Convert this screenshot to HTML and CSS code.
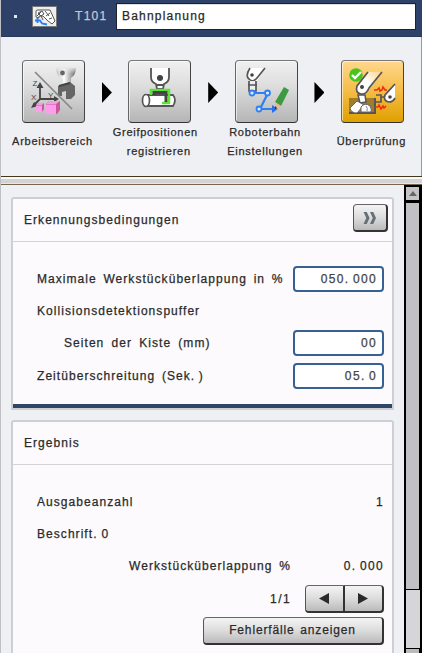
FILE: index.html
```html
<!DOCTYPE html>
<html lang="de">
<head>
<meta charset="utf-8">
<title>Bahnplanung</title>
<link rel="stylesheet" href="styles.css">
</head>
<body>
<div class="window">
  <header class="titlebar">
    <span class="dot"></span>
    <svg class="tool-icon" viewBox="0 0 25 21">
      <rect x=".5" y=".5" width="24" height="20" fill="#eee" stroke="#777"/>
      <path d="M4 11V5q0-1 2-1h12l5 11-3 3-4-3-5-5H7v2z" fill="#fff" stroke="#555"/>
      <path d="M6 7l4-2 2 3-3 2zM13 5l4 5M18 7l-4 3M5 10l4-4M17 13l3-1M9 10l2 4" fill="none" stroke="#555"/>
      <path d="M3 14.500h5l2 3 5 1M5.500 12v5" fill="none" stroke="#2b7df0" stroke-width="1.8"/>
    </svg>
    <span class="code">T101</span>
    <div class="name">Bahnplanung</div>
  </header>

  <nav class="steps">
    <div class="step">
      <div class="tile">
        <svg viewBox="0 0 60 60">
          <defs><linearGradient id="metal" x1="0" x2="1"><stop offset="0" stop-color="#bbb"/><stop offset=".4" stop-color="#fff"/><stop offset="1" stop-color="#666"/></linearGradient><linearGradient id="fade" x1="0" x2="0" y1="0" y2="1"><stop offset="0" stop-color="#e8e8e8"/><stop offset="1" stop-color="#e8e8e8" stop-opacity="0"/></linearGradient></defs>
          <path d="M33 7q0 9 7 11v4h8v-5q5-3 5-10z" fill="url(#metal)"/>
          <path d="M32 6h22v7H32z" fill="url(#fade)"/>
          <circle cx="39.500" cy="12" r="2.400" fill="#666"/>
          <path d="M35 25l12-4 5 4v9l-4 4h-5v-8l-4 1v4h-4z" fill="#666"/>
          <path d="M36 25l11-3" stroke="#444" stroke-width="2"/>
          <path d="M12 11l37 37" stroke="#888" stroke-width="1.7"/>
          <path d="M17 38V25M17 38h15M17 38l-6 6" fill="none" stroke="#444" stroke-width="1.8"/>
          <path d="M17 21l-3.500 6h7zM36 38l-5-3v6zM8 47l7-2-4-4z" fill="#444"/>
          <g class="axis"><text x="9.500" y="25">Z</text><text x="8" y="39">X</text><text x="25" y="37">Y</text></g>
          <path d="M13 44l3-2h5v6l-2 3h-6zM23 43l3-3h11v9l-3 4H23z" fill="#c9579c"/>
          <path d="M13 44.500h6V51h-6zM23 43.500h10V53H23z" fill="#ff9cec"/>
          <path d="M13 44l3-2h5l-2 2zM23 43l3-3h11l-4 3z" fill="#eea0d9"/>
        </svg>
      </div>
      <div class="caption">Arbeitsbereich</div>
    </div>
    <div class="next"></div>
    <div class="step">
      <div class="tile">
        <svg viewBox="0 0 60 60">
          <path d="M22 7v9q0 5 5 7l1 6h6l1-6q5-2 5-7V7" fill="#fff"/>
          <path d="M22 7v9q0 5 5 7l1 5h6l1-5q5-2 5-7V7M27 24h8" fill="none" stroke="#555" stroke-width="1.8"/>
          <circle cx="31" cy="17" r="3" fill="#444"/>
          <path d="M16 34h28q4 5 0 11H16z" fill="#fff" stroke="#555" stroke-width="1.8"/>
          <ellipse cx="17" cy="39.500" rx="3.500" ry="6" fill="#fff" stroke="#555" stroke-width="1.7"/>
          <path d="M22 34v-5h18v13h-7" fill="none" stroke="#5ee238" stroke-width="2.500"/>
          <path d="M25 34v-2.500h12V41" fill="none" stroke="#444" stroke-width="3"/>
        </svg>
      </div>
      <div class="caption"><span class="pull">Greifpositionen</span><span>registrieren</span></div>
    </div>
    <div class="next"></div>
    <div class="step">
      <div class="tile">
        <svg viewBox="0 0 60 60">
          <path d="M14 7q-4 7-1 10l3 3h5l8-13z" fill="#fff"/>
          <path d="M14 7q-5 8-1 11 4 4 8-1l8-10" fill="none" stroke="#555" stroke-width="1.7"/>
          <path d="M13 20v10h7V20M12 24h9" fill="#eee" stroke="#555" stroke-width="1.7"/>
          <circle cx="16" cy="14" r="1.800" fill="#444"/>
          <path d="M16 32h16l-8 16h14" fill="none" stroke="#2f80f2" stroke-width="2.200"/>
          <path d="M36 44l6 4-6 4z" fill="#2470ee"/>
          <g fill="#dfeaff" stroke="#2f80f2" stroke-width="1.800"><circle cx="16" cy="32" r="2.500"/><circle cx="31.500" cy="32" r="2.500"/><circle cx="23" cy="48" r="2.500"/></g>
          <path d="M48 26l5 3-8 16-6-4z" fill="#3d9b3f"/>
          <path d="M39 41l6 4-6 4z" fill="#e9b98e"/><path d="M39 45l2 2-2 2z" fill="#333"/>
        </svg>
      </div>
      <div class="caption"><span>Roboterbahn</span><span>Einstellungen</span></div>
    </div>
    <div class="next"></div>
    <div class="step">
      <div class="tile active">
        <svg viewBox="0 0 60 60">
          <defs><linearGradient id="arm" x1="0" y1="1" x2="1" y2="0"><stop offset=".5" stop-color="#fff"/><stop offset="1" stop-color="#fff" stop-opacity=".1"/></linearGradient></defs>
          <path d="M7 37h26v15H7z" fill="#a07b2b"/>
          <path d="M7 52h26V37" fill="none" stroke="#555" stroke-width="2"/>
          <path d="M26 11L15 26q-2 6 4 8 4 1 8-6L41 11z" fill="url(#arm)"/>
          <path d="M26 11L15 25q-2 7 4 8 5 1 8-6L40 11" fill="none" stroke="#555" stroke-width="1.7"/>
          <circle cx="20" cy="26" r="2" fill="#444"/>
          <path d="M16 34h7l1 7-6 1z" fill="#fff" stroke="#555" stroke-width="1.500"/>
          <path d="M15 40l7 4-7 8q-6 0-7-5z" fill="#fff" stroke="#666" stroke-width="1"/>
          <path d="M19 51v-5q4-5 9-1 2 3 1 6z" fill="#fff" stroke="#666" stroke-width="1"/>
          <path d="M24 45q2 2 1 5" fill="none" stroke="#888"/>
          <path d="M53 23L43 35q-1 6 5 6 3 0 5-4z" fill="#fff"/>
          <path d="M53 23L43 34q-2 6 4 7 4 0 6-4M43 36h-4M34 34h5v7h-5" fill="none" stroke="#555" stroke-width="1.700"/>
          <circle cx="48" cy="36" r="1.800" fill="#444"/>
          <path d="M32 29h3l2-2 1 3 2-1 1-3 2 3h2M33 46h3l1-2 2 4 2-3 1 2 2-2" fill="none" stroke="#f32c0f" stroke-width="1.600"/>
          <circle cx="14" cy="14" r="6.800" fill="#48c51d"/><path d="M10 14l3 3 6-6" fill="none" stroke="#fff" stroke-width="2.400"/>
        </svg>
      </div>
      <div class="caption">Überprüfung</div>
    </div>
  </nav>

  <div class="splitter"></div>

  <main class="body">
    <div class="panels">
      <section class="panel conditions">
        <div class="panel-head"><h2>Erkennungsbedingungen</h2>
          <button class="btn more"><svg viewBox="0 0 14 13"><path d="M0 0h3.500l3 6.500-3 6.500H0l3-6.500zM7 0h3.500l3 6.500-3 6.500H7l3-6.500z" fill="#667079"/></svg></button>
        </div>
        <div class="rows">
          <div class="row"><span>Maximale Werkstücküberlappung in %</span><div class="field num">050. 000</div></div>
          <div class="row"><span>Kollisionsdetektionspuffer</span></div>
          <div class="row indent"><span class="wider">Seiten der Kiste (mm)</span><div class="field num">00</div></div>
          <div class="row"><span>Zeitüberschreitung (Sek.<span class="narrow"> </span>)</span><div class="field num">05. 0</div></div>
        </div>
      </section>
      <section class="panel result">
        <div class="panel-head"><h2>Ergebnis</h2></div>
        <div class="rows">
          <div class="row"><span>Ausgabeanzahl</span><span class="num">1</span></div>
          <div class="row"><span class="tight">Beschrift. 0</span></div>
          <div class="row overlap"><span>Werkstücküberlappung %</span><span class="num">0. 000</span></div>
          <div class="row end"><span class="page">1/1</span>
            <div class="pager"><button class="btn"><svg viewBox="0 0 10 11"><path d="M10 0v11L0 5.500z"/></svg></button><button class="btn"><svg viewBox="0 0 10 11"><path d="M0 0v11l10-5.500z"/></svg></button></div>
          </div>
          <div class="row end"><button class="btn wide">Fehlerfälle anzeigen</button></div>
        </div>
      </section>
    </div>
    <div class="scrollbar">
      <div class="up"><svg viewBox="0 0 8 5"><path d="M4 0l4 5H0z" fill="#666"/></svg></div>
      <div class="thumb"></div>
      <div class="track"></div>
      <div class="down"></div>
    </div>
  </main>
</div>
</body>
</html>
```
FILE: styles.css
```css
* { box-sizing: border-box; }

body {
  margin: 0;
  font: 12px/16px "Liberation Sans", Arial, sans-serif;
  letter-spacing: 1.05px;
  word-spacing: 2.3px;
  color: #2a2a2a;
  -webkit-text-stroke: .25px currentColor;
}

.window {
  width: 422px;
  height: 653px;
  display: flex;
  flex-direction: column;
  overflow: hidden;
  background: #eff0f3;
  border-left: 1px solid #bfc0c4;
}

svg { display: block; }

.titlebar {
  flex: none;
  height: 37px;
  display: flex;
  align-items: flex-start;
  background: #2e4168;
  padding: 3px 6px 0 12px;
  margin-left: -1px;
  border-bottom: 1px solid #27385c;
}
.dot { width: 3px; height: 3px; margin: 12px 17px 0 2px; background: #e4e7ef; }
.tool-icon { width: 25px; height: 21px; margin: 3px 18px 0 -2px; }
.code { width: 41px; margin-top: 5px; color: #c3c9d6; letter-spacing: 1.3px; }
.name {
  flex: 1;
  height: 27px;
  padding: 4px 5px;
  background: #fff;
  border: 1px solid #1c222e;
  box-shadow: inset 0 1px #ddd;
  letter-spacing: 1.2px;
}

.steps {
  flex: none;
  height: 139px;
  display: flex;
  padding: 23px 0 0 21px;
  font-size: 11px;
  letter-spacing: .75px;
  border-right: 1px solid #9a9a9e;
}
.step { width: 63px; display: flex; flex-direction: column; align-items: center; }
.tile {
  width: 63px;
  height: 63px;
  flex: none;
  border: 1.5px solid #555;
  border-color: #777 #444 #333 #666;
  border-radius: 4px;
  background: linear-gradient(#f0f0f0, #dedede 40%, #b5b5b5);
  box-shadow: inset 1px 1px #fff9;
}
.tile.active { background: linear-gradient(#ffd78e, #f5bc45 50%, #e0a000); }
.tile svg { width: 60px; height: 60px; }
.axis { font-size: 8px; letter-spacing: 0; fill: #444; }
.next {
  width: 10px;
  height: 21px;
  margin: 22px 16.4px 0 16.9px;
  background: #000;
  clip-path: polygon(0 0, 100% 50%, 0 100%);
}
.caption {
  height: 37px;
  line-height: 18.7px;
  white-space: nowrap;
  display: flex;
  flex-direction: column;
  justify-content: center;
  align-items: center;
  margin-right: 2px;
}
.pull { margin-right: 7px; }

.splitter {
  flex: none;
  height: 9px;
  background: linear-gradient(#43381f 0 1px, #faf8f2 1px 3px, #d2d3d5 3px 7px, #f0e6d6 7px 8px, #79664c 8px 9px);
}

.body { flex: 1; min-height: 0; display: flex; }
.panels {
  flex: 1;
  display: flex;
  flex-direction: column;
  gap: 10px;
  padding: 12px 10px 0;
}
.panel {
  flex: none;
  background: #fcfafc;
  border: 2px solid #cdcfd3;
  border-radius: 3px 3px 0 0;
}
.conditions { height: 213px; display: flex; flex-direction: column; }
.conditions::after { content: ""; height: 4px; margin-top: auto; background: #314566; }
.result { height: 260px; }
.panel-head {
  height: 43px;
  flex: none;
  display: flex;
  align-items: center;
  justify-content: space-between;
  padding: 0 4px 0 11px;
  border-bottom: 1.5px solid #d2d3d5;
}
h2 { margin: 0; font: inherit; }

.rows { padding: 20.500px 8px 0 24px; }
.row { height: 32.3px; display: flex; align-items: center; justify-content: space-between; }
.row > span { white-space: nowrap; }
.indent { padding-left: 27px; }
.overlap { padding-left: 92px; }
.end { justify-content: flex-end; }
.tight { word-spacing: -.5px; }
.narrow { word-spacing: -1px; }
.wider { word-spacing: 2.8px; }
.page { margin-right: 14px; letter-spacing: 1.4px; }
.num { letter-spacing: 1.35px; word-spacing: -1.3px; }
.field {
  width: 91px;
  height: 26px;
  padding: 3px 5px 0 0;
  text-align: right;
  color: #444;
  background: #fff;
  border: 2px solid #376192;
  border-radius: 4px;
}

.btn {
  display: flex;
  align-items: center;
  justify-content: center;
  padding: 0;
  font: inherit;
  letter-spacing: inherit;
  word-spacing: inherit;
  color: inherit;
  border: 1.5px solid #555;
  border-color: #666 #333 #333 #555;
  border-width: 1px 2px 2px 1px;
  border-radius: 4px;
  background: linear-gradient(#f4f4f4, #dcdcdc 50%, #bababa);
}
.more { width: 35px; height: 28px; margin-bottom: 4px; }
.more svg { width: 14px; height: 12px; }
.pager { display: flex; }
.pager .btn { width: 39.5px; height: 28px; }
.pager .btn:first-child { border-radius: 4px 0 0 4px; }
.pager .btn:last-child { border-radius: 0 4px 4px 0; border-left: 0; }
.pager svg { width: 10px; height: 11px; fill: #2a2a2a; }
.wide { width: 181px; height: 28px; letter-spacing: .85px; word-spacing: 1.6px; padding-right: 1px; }

.scrollbar {
  width: 18px;
  flex: none;
  display: flex;
  flex-direction: column;
  gap: 1px;
  padding: 2px 3px 0 2px;
  background: #000;
}
.up { height: 13px; margin-bottom: 2px; background: #c4c4c6; display: flex; align-items: center; justify-content: center; }
.up svg { width: 8px; height: 5px; }
.thumb { height: 386px; background: #c1c1c3; }
.track { height: 58px; background: #d6d6d8; margin-right: -1px; }
.down { flex: 1; background: #bbb; }
```
